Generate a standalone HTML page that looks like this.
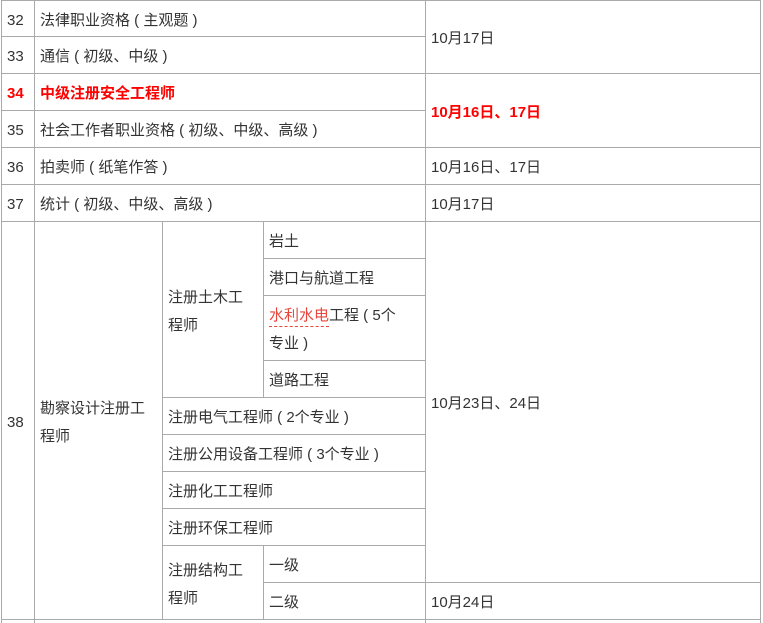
<!DOCTYPE html>
<html><head><meta charset="utf-8"><style>
html,body{margin:0;width:763px;height:623px;overflow:hidden}
body{background:#fff;font-family:"Liberation Sans","Noto Sans CJK SC",sans-serif;font-size:15px;color:#333;position:relative}
.c{position:absolute;border:1px solid #aaa;box-sizing:border-box;display:flex;align-items:center;padding-left:5px;padding-top:4px;line-height:28px;margin:-1px 0 0 -1px}
.r{color:#f00;font-weight:bold}
.u{color:#e8453c;border-bottom:1px dashed #e8453c;line-height:20px;display:inline-block}
</style></head><body>
<div class="c" style="left:2px;top:1px;width:34px;height:37px">32</div>
<div class="c" style="left:35px;top:1px;width:392px;height:37px">法律职业资格 ( 主观题 )</div>
<div class="c" style="left:2px;top:37px;width:34px;height:38px">33</div>
<div class="c" style="left:35px;top:37px;width:392px;height:38px">通信 ( 初级、中级 )</div>
<div class="c" style="left:426px;top:1px;width:336px;height:74px">10月17日</div>
<div class="c r" style="left:2px;top:74px;width:34px;height:38px">34</div>
<div class="c r" style="left:35px;top:74px;width:392px;height:38px">中级注册安全工程师</div>
<div class="c" style="left:2px;top:111px;width:34px;height:38px">35</div>
<div class="c" style="left:35px;top:111px;width:392px;height:38px">社会工作者职业资格 ( 初级、中级、高级 )</div>
<div class="c r" style="left:426px;top:74px;width:336px;height:75px">10月16日、17日</div>
<div class="c" style="left:2px;top:148px;width:34px;height:38px">36</div>
<div class="c" style="left:35px;top:148px;width:392px;height:38px">拍卖师 ( 纸笔作答 )</div>
<div class="c" style="left:426px;top:148px;width:336px;height:38px">10月16日、17日</div>
<div class="c" style="left:2px;top:185px;width:34px;height:38px">37</div>
<div class="c" style="left:35px;top:185px;width:392px;height:38px">统计 ( 初级、中级、高级 )</div>
<div class="c" style="left:426px;top:185px;width:336px;height:38px">10月17日</div>
<div class="c" style="left:2px;top:222px;width:34px;height:399px">38</div>
<div class="c" style="left:35px;top:222px;width:129px;height:399px">勘察设计注册工<br>程师</div>
<div class="c" style="left:163px;top:222px;width:102px;height:177px">注册土木工<br>程师</div>
<div class="c" style="left:264px;top:222px;width:163px;height:38px">岩土</div>
<div class="c" style="left:264px;top:259px;width:163px;height:38px">港口与航道工程</div>
<div class="c" style="left:264px;top:296px;width:163px;height:66px;display:block;padding-top:6px"><span class="u">水利水电</span>工程 ( 5个<br>专业 )</div>
<div class="c" style="left:264px;top:361px;width:163px;height:38px">道路工程</div>
<div class="c" style="left:163px;top:398px;width:264px;height:38px">注册电气工程师 ( 2个专业 )</div>
<div class="c" style="left:163px;top:435px;width:264px;height:38px">注册公用设备工程师 ( 3个专业 )</div>
<div class="c" style="left:163px;top:472px;width:264px;height:38px">注册化工工程师</div>
<div class="c" style="left:163px;top:509px;width:264px;height:38px">注册环保工程师</div>
<div class="c" style="left:163px;top:546px;width:102px;height:75px">注册结构工<br>程师</div>
<div class="c" style="left:264px;top:546px;width:163px;height:38px">一级</div>
<div class="c" style="left:264px;top:583px;width:163px;height:38px">二级</div>
<div class="c" style="left:426px;top:222px;width:336px;height:362px">10月23日、24日</div>
<div class="c" style="left:426px;top:583px;width:336px;height:38px">10月24日</div>
<div class="c" style="left:2px;top:620px;width:34px;height:20px"></div>
<div class="c" style="left:35px;top:620px;width:392px;height:20px"></div>
<div class="c" style="left:426px;top:620px;width:336px;height:20px"></div>
</body></html>
